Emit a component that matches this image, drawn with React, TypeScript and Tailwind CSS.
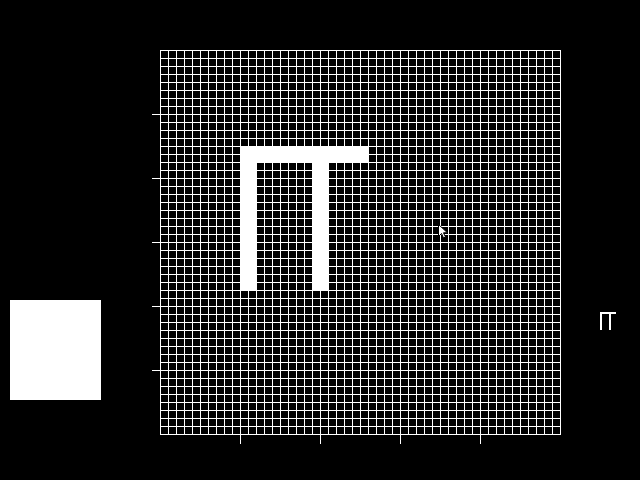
import React from "react";

const COLS = 50;
const ROWS = 48;
const CELL = 8;
const OX = 8; // offset of grid inside svg (room for left ticks)

const shapeCells: [number, number, number, number][] = [
  // x, y, w, h in cells
  [10, 12, 16, 2],
  [10, 12, 2, 18],
  [19, 12, 2, 18],
];

function Canvas() {
  const w = OX + COLS * CELL + 1;
  const h = ROWS * CELL + 1 + 10;
  const lines: React.ReactNode[] = [];
  for (let i = 0; i <= COLS; i++) {
    lines.push(<rect key={"v" + i} x={OX + i * CELL} y={0} width={1} height={ROWS * CELL + 1} fill="#fff" />);
  }
  for (let j = 0; j <= ROWS; j++) {
    lines.push(<rect key={"h" + j} x={OX} y={j * CELL} width={COLS * CELL + 1} height={1} fill="#fff" />);
  }
  const ticks: React.ReactNode[] = [];
  [64, 128, 192, 256, 320].forEach((y) =>
    ticks.push(<rect key={"lt" + y} x={0} y={y} width={8} height={1} fill="#fff" />)
  );
  [88, 168, 248, 328].forEach((x) =>
    ticks.push(<rect key={"bt" + x} x={x} y={ROWS * CELL} width={1} height={10} fill="#fff" />)
  );
  return (
    <svg width={w} height={h} viewBox={`0 0 ${w} ${h}`} shapeRendering="crispEdges" className="block">
      {lines}
      {ticks}
      {shapeCells.map(([x, y, cw, ch], k) => (
        <rect key={"s" + k} x={OX + x * CELL} y={y * CELL} width={cw * CELL + 1} height={ch * CELL + 1} fill="#fff" />
      ))}
      <g transform="translate(286,174)" shapeRendering="auto">
        <path d="M0.5 0.5 L0.5 12.5 L3.5 9.5 L5.5 14 L7.5 13 L5.5 8.8 L9.5 8.8 Z" fill="#fff" stroke="#000" strokeWidth="1" strokeLinejoin="miter" />
      </g>
    </svg>
  );
}

function Preview() {
  return (
    <svg width={COLS} height={ROWS} viewBox={`0 0 ${COLS} ${ROWS}`} shapeRendering="crispEdges" className="block">
      {shapeCells.map(([x, y, cw, ch], k) => (
        <rect key={k} x={x} y={y} width={cw} height={ch} fill="#fff" />
      ))}
    </svg>
  );
}

export default function App() {
  return (
    <div className="flex w-[640px] h-[480px] bg-black overflow-hidden">
      <div className="w-[152px] shrink-0 pt-[300px] pl-[10px]">
        <div className="w-[91px] h-[100px] bg-white" />
      </div>
      <div className="shrink-0 pt-[50px]">
        <Canvas />
      </div>
      <div className="shrink-0 pt-[300px] pl-[29px]">
        <Preview />
      </div>
    </div>
  );
}
